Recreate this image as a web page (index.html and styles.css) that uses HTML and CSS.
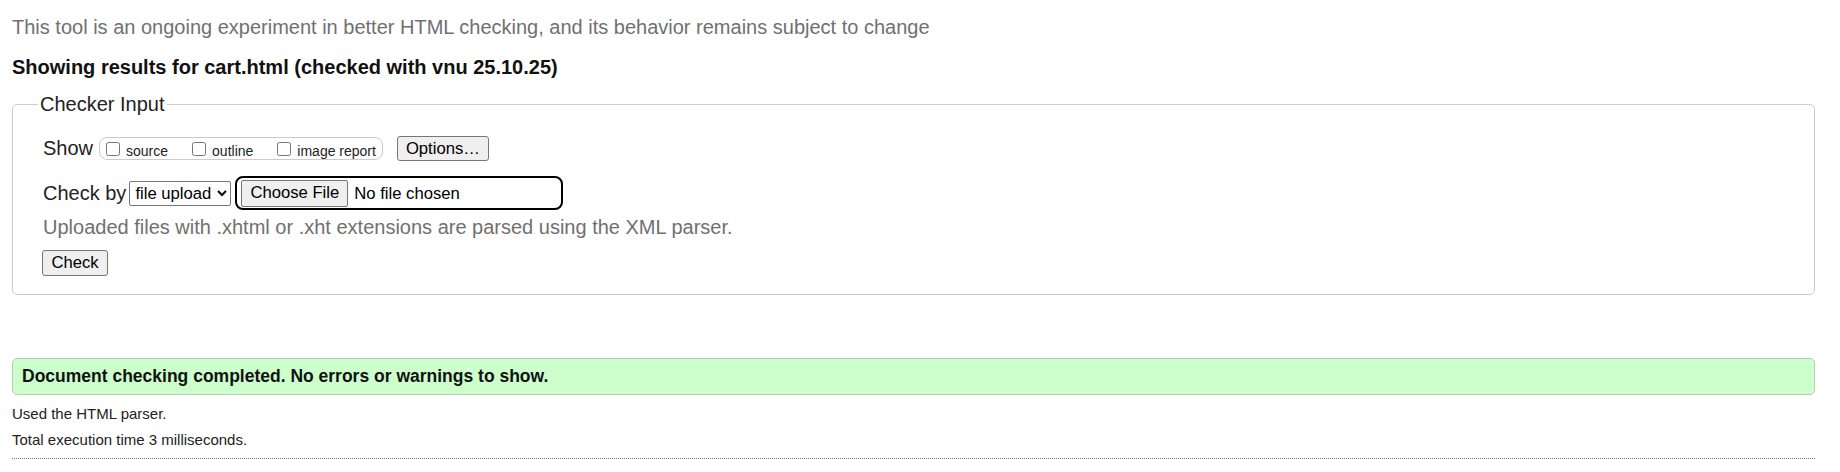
FILE: index.html
```html
<!DOCTYPE html>
<html lang="en">
<head>
<meta charset="utf-8">
<title>Nu Html Checker</title>
<link rel="stylesheet" href="styles.css">
</head>
<body>
<p class="intro">This tool is an ongoing experiment in better HTML checking, and its behavior remains subject to change</p>
<p class="results">Showing results for cart.html (checked with vnu 25.10.25)</p>
<form class="checker">
  <fieldset class="input-set">
    <legend>Checker Input</legend>
    <div class="row show-row">
      <span class="label">Show</span>
      <fieldset class="opts">
        <label class="opt"><input type="checkbox"><span>source</span></label>
        <label class="opt"><input type="checkbox"><span>outline</span></label>
        <label class="opt"><input type="checkbox"><span>image report</span></label>
      </fieldset>
      <button type="button" class="btn options">Options…</button>
    </div>
    <div class="row by-row">
      <span class="label">Check by</span>
      <select class="sel"><option>file upload</option></select>
      <span class="file-wrap"><input type="file" class="file"></span>
    </div>
    <p class="hint">Uploaded files with .xhtml or .xht extensions are parsed using the XML parser.</p>
    <div class="row check-row"><button type="button" class="btn check">Check</button></div>
  </fieldset>
</form>
<p class="success">Document checking completed. No errors or warnings to show.</p>
<p class="meta first">Used the HTML parser.</p>
<p class="meta">Total execution time 3 milliseconds.</p>
<hr class="sep">
</body>
</html>
```

FILE: styles.css
```css
html, body {
  background: #fff;
}
body {
  margin: 0 25px 0 12px;
  font-family: "Liberation Sans", Arial, sans-serif;
  color: #111;
}
.intro {
  margin: 15px 0 0;
  font-size: 20px;
  line-height: 24px;
  color: #707070;
}
.results {
  margin: 16px 0 0;
  font-size: 20px;
  line-height: 24px;
  font-weight: bold;
  color: #111;
}
.checker {
  margin: 0;
}
.input-set {
  margin: 14px 0 0;
  border: 1px solid #ccc;
  border-radius: 5px;
  padding: 20px 20px 18px 30px;
  min-width: 0;
}
.input-set legend {
  font-size: 20px;
  line-height: 23px;
  padding: 0 2px;
  margin-left: -5px;
  color: #222;
}
.row {
  display: flex;
  align-items: center;
}
.label {
  font-size: 20px;
  line-height: 23px;
  color: #222;
}
.show-row {
  height: 25px;
}
.opts {
  display: flex;
  align-items: center;
  margin: 0 0 0 6px;
  height: 23px;
  box-sizing: border-box;
  border: 1px solid #ccc;
  border-radius: 8px;
  padding: 0 6px;
  min-width: 0;
}
.opt {
  display: flex;
  align-items: center;
  font-size: 14px;
  color: #222;
  margin-right: 24px;
}
.opt:last-child {
  margin-right: 0;
}
.opt input {
  width: 14px;
  height: 14px;
  margin: 0 6px 0 0;
}
.opt span {
  position: relative;
  top: 2px;
}
.btn {
  font-family: "Liberation Sans", Arial, sans-serif;
  font-size: 16.67px;
  color: #000;
  background: #efefef;
  border: 1px solid #767676;
  border-radius: 3px;
  box-sizing: border-box;
  height: 25px;
  padding: 0 7px;
}
.options {
  margin-left: 14px;
  width: 92px;
}
.by-row {
  margin-top: 15px;
  height: 34px;
}
.sel {
  margin-left: 3px;
  width: 102px;
  height: 25px;
  box-sizing: border-box;
  font-family: "Liberation Sans", Arial, sans-serif;
  font-size: 16.67px;
  color: #000;
  background: #fff;
  border: 1px solid #767676;
  border-radius: 2px;
  padding: 0 1px;
}
.file-wrap {
  display: flex;
  align-items: center;
  margin-left: 4px;
  width: 328px;
  height: 34px;
  box-sizing: border-box;
  border: 2px solid #000;
  border-radius: 8px;
  padding: 0 4px;
}
.file {
  font-family: "Liberation Sans", Arial, sans-serif;
  font-size: 16.67px;
  color: #000;
  width: 316px;
}
.file::file-selector-button {
  font-family: "Liberation Sans", Arial, sans-serif;
  font-size: 16.67px;
  height: 27px;
  padding: 0 8px;
  margin-right: 6px;
  background: #efefef;
  border: 1px solid #767676;
  border-radius: 2px;
  color: #000;
}
.hint {
  margin: 6px 0 0;
  font-size: 20px;
  line-height: 23px;
  color: #707070;
}
.check-row {
  margin-top: 11px;
}
.check {
  width: 66px;
  height: 26px;
  margin-left: -1px;
}
.success {
  margin: 63px 0 0;
  height: 37px;
  box-sizing: border-box;
  border: 1px solid #b9ccb9;
  border-radius: 5px;
  background: #ccffcc;
  padding: 0 9px;
  font-size: 17.5px;
  line-height: 35px;
  font-weight: bold;
  color: #111;
}
.meta {
  margin: 6px 0 0;
  font-size: 15px;
  line-height: 20px;
  color: #222;
}
.meta.first {
  margin-top: 9px;
}
.sep {
  margin: 8px 0 0;
  border: 0;
  border-top: 1px dotted #777;
  height: 0;
}
```
